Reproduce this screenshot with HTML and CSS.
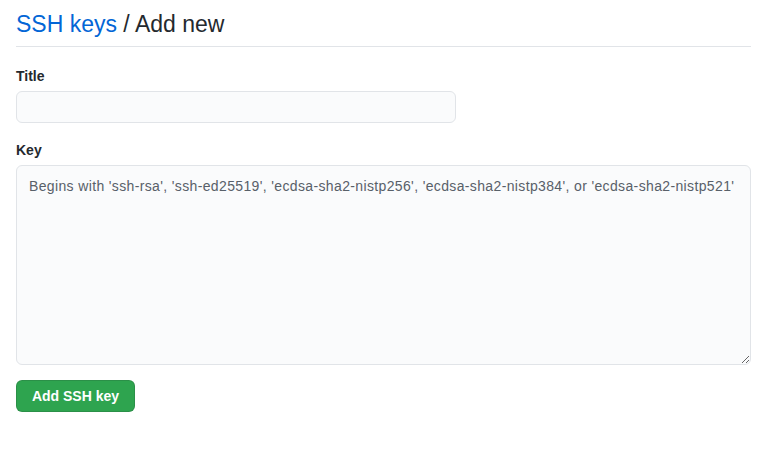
FILE: index.html
```
<!DOCTYPE html>
<html>
<head>
<meta charset="utf-8">
<link rel="stylesheet" href="styles.css">
</head>
<body>
<div class="page">
  <div class="subhead">
    <h2 class="subhead-heading"><a class="crumb" href="#">SSH keys</a> / Add new</h2>
  </div>
  <form class="form">
    <div class="form-group">
      <label class="label" for="title">Title</label>
      <input class="input input-title" id="title" type="text">
    </div>
    <div class="form-group">
      <label class="label" for="key">Key</label>
      <textarea class="input input-key" id="key" placeholder="Begins with 'ssh-rsa', 'ssh-ed25519', 'ecdsa-sha2-nistp256', 'ecdsa-sha2-nistp384', or 'ecdsa-sha2-nistp521'"></textarea>
    </div>
    <button class="btn" type="button">Add SSH key</button>
  </form>
</div>
</body>
</html>
```
FILE: styles.css
```
* { box-sizing: border-box; }
html, body { margin: 0; padding: 0; background: #fff; }
body {
  font-family: "Liberation Sans", Arial, sans-serif;
  font-size: 14px;
  color: #24292e;
}
.page { padding: 0 20px 0 16px; }
.subhead {
  display: flex;
  padding-top: 9px;
  padding-bottom: 7px;
  margin-bottom: 17px;
  border-bottom: 1px solid #e1e4e8;
}
.subhead-heading {
  margin: 0;
  font-size: 23px;
  font-weight: 400;
  line-height: 30px;
  color: #24292e;
}
.crumb { color: #0366d6; text-decoration: none; }
.form-group { margin-bottom: 15px; }
.label {
  display: block;
  font-weight: bold;
  font-size: 14px;
  line-height: 20px;
  padding-top: 2px;
  margin-bottom: 5px;
}
.input {
  display: block;
  font-family: "Liberation Sans", Arial, sans-serif;
  font-size: 14px;
  line-height: 20px;
  color: #24292e;
  background: #fafbfc;
  border: 1px solid #e1e4e8;
  border-radius: 6px;
  padding: 5px 12px;
  outline: none;
}
.input-title { width: 440px; height: 32px; }
.input-key {
  width: 100%;
  height: 200px;
  padding: 10px 4px 10px 12px;
  resize: vertical;
  letter-spacing: 0.36px;
}
.input-key::placeholder { color: #586069; }
.btn {
  display: block;
  font-family: "Liberation Sans", Arial, sans-serif;
  font-size: 14px;
  font-weight: bold;
  line-height: 20px;
  white-space: nowrap;
  text-align: center;
  color: #fff;
  background: #2ea44f;
  border: 1px solid rgba(27,31,35,0.15);
  border-radius: 6px;
  padding: 5px 0;
  width: 119px;
  height: 32px;
}
```
